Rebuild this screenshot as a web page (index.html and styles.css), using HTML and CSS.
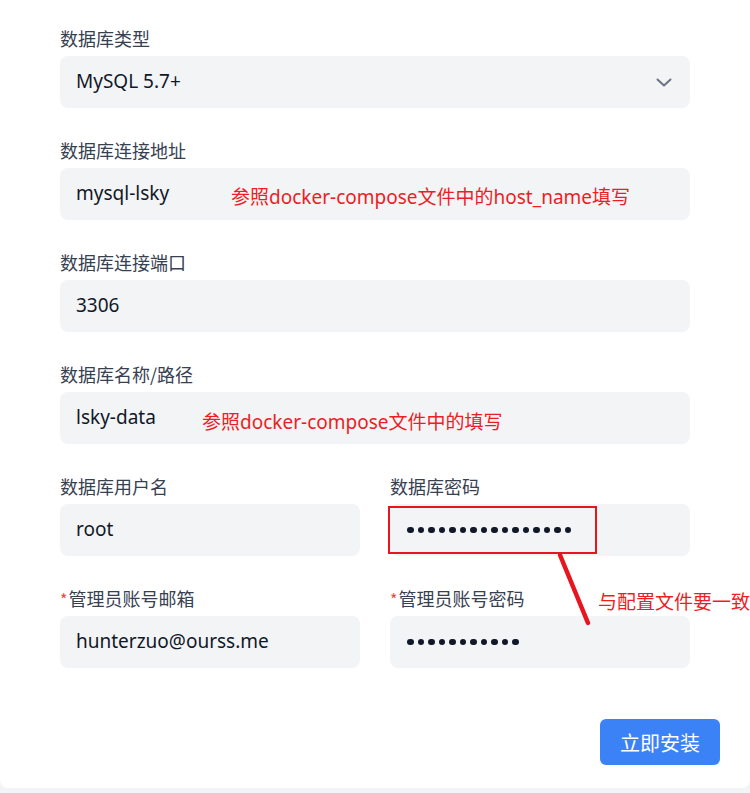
FILE: index.html
```html
<!DOCTYPE html>
<html lang="zh-CN">
<head>
<meta charset="utf-8">
<title>安装</title>
<link rel="stylesheet" href="styles.css">
</head>
<body>
<div class="card">
  <form class="form">
    <div class="field">
      <label class="label">数据库类型</label>
      <div class="input select">
        <span class="value">MySQL 5.7+</span>
        <svg class="chevron" width="16" height="9" viewBox="0 0 16 9"><path d="M1.5 1.5 L8 7.5 L14.5 1.5" fill="none" stroke="#6b7280" stroke-width="2" stroke-linecap="round" stroke-linejoin="round"/></svg>
      </div>
    </div>
    <div class="field">
      <label class="label">数据库连接地址</label>
      <div class="input"><span class="value">mysql-lsky</span></div>
    </div>
    <div class="field">
      <label class="label">数据库连接端口</label>
      <div class="input"><span class="value">3306</span></div>
    </div>
    <div class="field">
      <label class="label">数据库名称/路径</label>
      <div class="input"><span class="value">lsky-data</span></div>
    </div>
    <div class="row">
      <div class="field">
        <label class="label">数据库用户名</label>
        <div class="input"><span class="value">root</span></div>
      </div>
      <div class="field">
        <label class="label">数据库密码</label>
        <div class="input">
          <span class="dots">
            <i></i><i></i><i></i><i></i><i></i><i></i><i></i><i></i><i></i><i></i><i></i><i></i><i></i><i></i><i></i><i></i>
          </span>
        </div>
      </div>
    </div>
    <div class="row">
      <div class="field">
        <label class="label"><span class="req">*</span>管理员账号邮箱</label>
        <div class="input"><span class="value">hunterzuo@ourss.me</span></div>
      </div>
      <div class="field">
        <label class="label"><span class="req">*</span>管理员账号密码</label>
        <div class="input">
          <span class="dots">
            <i></i><i></i><i></i><i></i><i></i><i></i><i></i><i></i><i></i><i></i><i></i>
          </span>
        </div>
      </div>
    </div>
    <div class="actions">
      <button type="button" class="btn">立即安装</button>
    </div>
  </form>

  <span class="note note-host">参照docker-compose文件中的host_name填写</span>
  <span class="note note-db">参照docker-compose文件中的填写</span>
  <div class="highlight"></div>
  <svg class="pointer" width="50" height="90" viewBox="0 0 50 90"><line x1="10" y1="10" x2="38" y2="78" stroke="#e8141e" stroke-width="4.5" stroke-linecap="round"/></svg>
  <span class="note note-side">与配置文件要一致</span>
</div>
</body>
</html>
```
FILE: styles.css
```css
html, body {
  margin: 0;
  padding: 0;
}
body {
  background: #f3f4f6;
  width: 750px;
  height: 793px;
  overflow: hidden;
  font-family: "Noto Sans", "Noto Sans CJK SC", sans-serif;
}
.card {
  position: relative;
  background: #ffffff;
  height: 788px;
  box-sizing: border-box;
  border-radius: 0 0 8px 8px;
  padding: 26px 30px 0 60px;
}
.form {
  display: flex;
  flex-direction: column;
  gap: 30px;
  margin: 0;
}
.field {
  display: flex;
  flex-direction: column;
  gap: 6px;
  width: 630px;
}
.row {
  display: flex;
  gap: 30px;
  width: 630px;
}
.row .field {
  width: 300px;
}
.label {
  display: block;
  height: 24px;
  font-family: "Noto Sans CJK SC", sans-serif;
  font-size: 18px;
  line-height: 24px;
  color: #374151;
  overflow: hidden;
}
.req {
  color: #ef4444;
  font-size: 16px;
  line-height: 0;
  margin-right: 1px;
}
.input {
  height: 52px;
  box-sizing: border-box;
  background: #f3f4f6;
  border-radius: 8px;
  padding: 0 16px;
  display: flex;
  align-items: center;
  color: #111827;
}
.select {
  justify-content: space-between;
  padding-right: 18px;
}
.value {
  font-size: 19px;
  line-height: 24px;
  margin-top: -2px;
}
.chevron {
  display: block;
}
.dots {
  display: flex;
  gap: 4px;
  margin-left: 1px;
}
.dots i {
  display: block;
  width: 6.5px;
  height: 6.5px;
  border-radius: 50%;
  background: #111827;
}
.actions {
  display: flex;
  justify-content: flex-end;
  margin-top: 21px;
}
.btn {
  width: 120px;
  height: 46px;
  border: none;
  border-radius: 6px;
  background: #3b82f6;
  color: #ffffff;
  font-family: "Noto Sans CJK SC", sans-serif;
  font-size: 20px;
  padding: 0;
}
.note {
  position: absolute;
  color: #ee1c25;
  font-family: "Noto Sans", "Noto Sans CJK SC", sans-serif;
  font-size: 19px;
  line-height: 26px;
  white-space: nowrap;
}
.note-host {
  left: 231px;
  top: 184px;
}
.note-db {
  left: 202px;
  top: 409px;
}
.note-side {
  left: 598px;
  top: 589px;
}
.highlight {
  position: absolute;
  left: 388px;
  top: 506px;
  width: 209px;
  height: 48px;
  box-sizing: border-box;
  border: 2px solid #e8141e;
}
.pointer {
  position: absolute;
  left: 550px;
  top: 545px;
}
```
